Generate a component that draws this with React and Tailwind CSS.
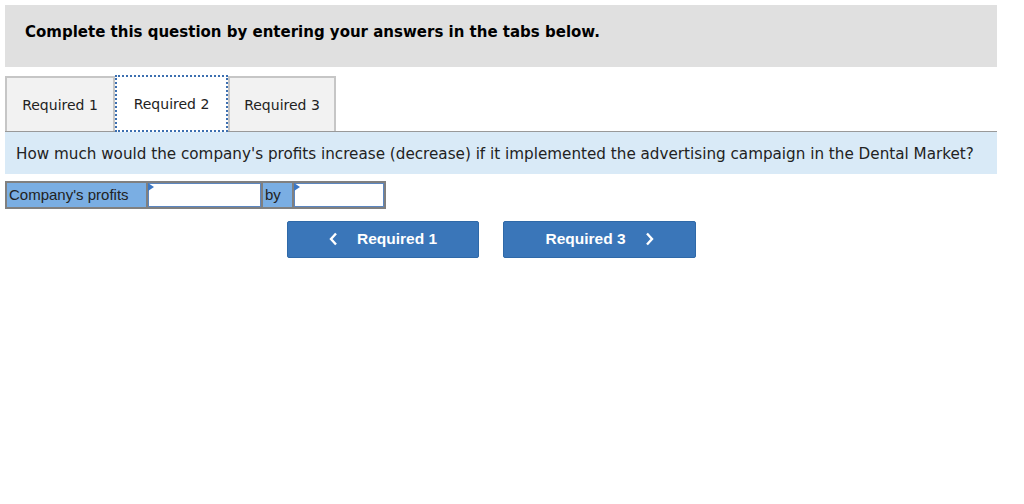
export default function App() {
  return (
    <div className="min-h-[504px] w-[1024px] bg-white pt-[5px] pl-[5px]" style={{ fontFamily: '"DejaVu Sans", Verdana, sans-serif' }}>
      <div className="w-[992px]">
        <div className="h-[62px] bg-[#e0e0e0] pl-[20px] pt-[18px]">
          <h2 className="text-[15px] font-bold leading-[18px] text-black">
            Complete this question by entering your answers in the tabs below.
          </h2>
        </div>

        <div className="mt-[8px] flex items-end">
          <button className="flex h-[55px] w-[110px] items-center justify-center border-2 border-b-0 border-[#c6c6c6] bg-[#f2f2f2] pt-[2px] text-[14px] text-[#222]">
            Required 1
          </button>
          <button className="-mb-[1px] flex h-[57px] w-[113px] items-center justify-center border-2 border-dotted border-[#3c6fb0] bg-white pt-[1px] text-[14px] text-[#222]">
            Required 2
          </button>
          <button className="flex h-[55px] w-[108px] items-center justify-center border-2 border-b-0 border-[#c6c6c6] bg-[#f2f2f2] pt-[2px] text-[14px] text-[#222]">
            Required 3
          </button>
        </div>
        <div className="h-px bg-[#999]" />

        <div className="flex h-[42px] items-center bg-[#d9eaf7] pl-[11px] pt-[2px]">
          <p className="text-[15.2px] text-[#222]">
            How much would the company's profits increase (decrease) if it implemented the advertising campaign in the Dental Market?
          </p>
        </div>

        <div className="mt-[7px] flex h-[28px] w-[381px] border-2 border-[#808080]" style={{ fontFamily: '"Liberation Sans", Arial, sans-serif' }}>
          <div className="flex w-[139px] items-center bg-[#7aaee3] pl-[2px] text-[15px] text-[#222]">
            Company's profits
          </div>
          <div className="relative w-[117px] border-x-2 border-[#808080] bg-white">
            <input className="h-full w-full border border-[#5b86c0] bg-white px-1 outline-none" />
            <div className="absolute left-0 top-0 h-0 w-0 border-y-[4px] border-l-[6px] border-y-transparent border-l-[#3a76c4]" />
          </div>
          <div className="flex w-[29px] items-center bg-[#7aaee3] pl-[2px] text-[15px] text-[#222]">by</div>
          <div className="relative flex-1 border-l-2 border-[#808080] bg-white">
            <input className="h-full w-full border border-[#5b86c0] bg-white px-1 outline-none" />
            <div className="absolute left-0 top-0 h-0 w-0 border-y-[4px] border-l-[6px] border-y-transparent border-l-[#3a76c4]" />
          </div>
        </div>

        <div className="mt-[12px] flex gap-[24px] pl-[282px]" style={{ fontFamily: '"Liberation Sans", Arial, sans-serif' }}>
          <button className="flex h-[37px] w-[192px] items-center justify-center gap-[19px] rounded-[2px] border border-[#2f69a8] bg-[#3a76b9] pb-[2px] text-[15.5px] font-bold text-white">
            <svg width="9" height="14" viewBox="0 0 9 14" fill="none" stroke="white" strokeWidth="2.4">
              <path d="M7 1.5 L2 7 L7 12.5" />
            </svg>
            Required 1
          </button>
          <button className="flex h-[37px] w-[193px] items-center justify-center gap-[19px] rounded-[2px] border border-[#2f69a8] bg-[#3a76b9] pb-[2px] text-[15.5px] font-bold text-white">
            Required 3
            <svg width="9" height="14" viewBox="0 0 9 14" fill="none" stroke="white" strokeWidth="2.4">
              <path d="M2 1.5 L7 7 L2 12.5" />
            </svg>
          </button>
        </div>
      </div>
    </div>
  );
}
